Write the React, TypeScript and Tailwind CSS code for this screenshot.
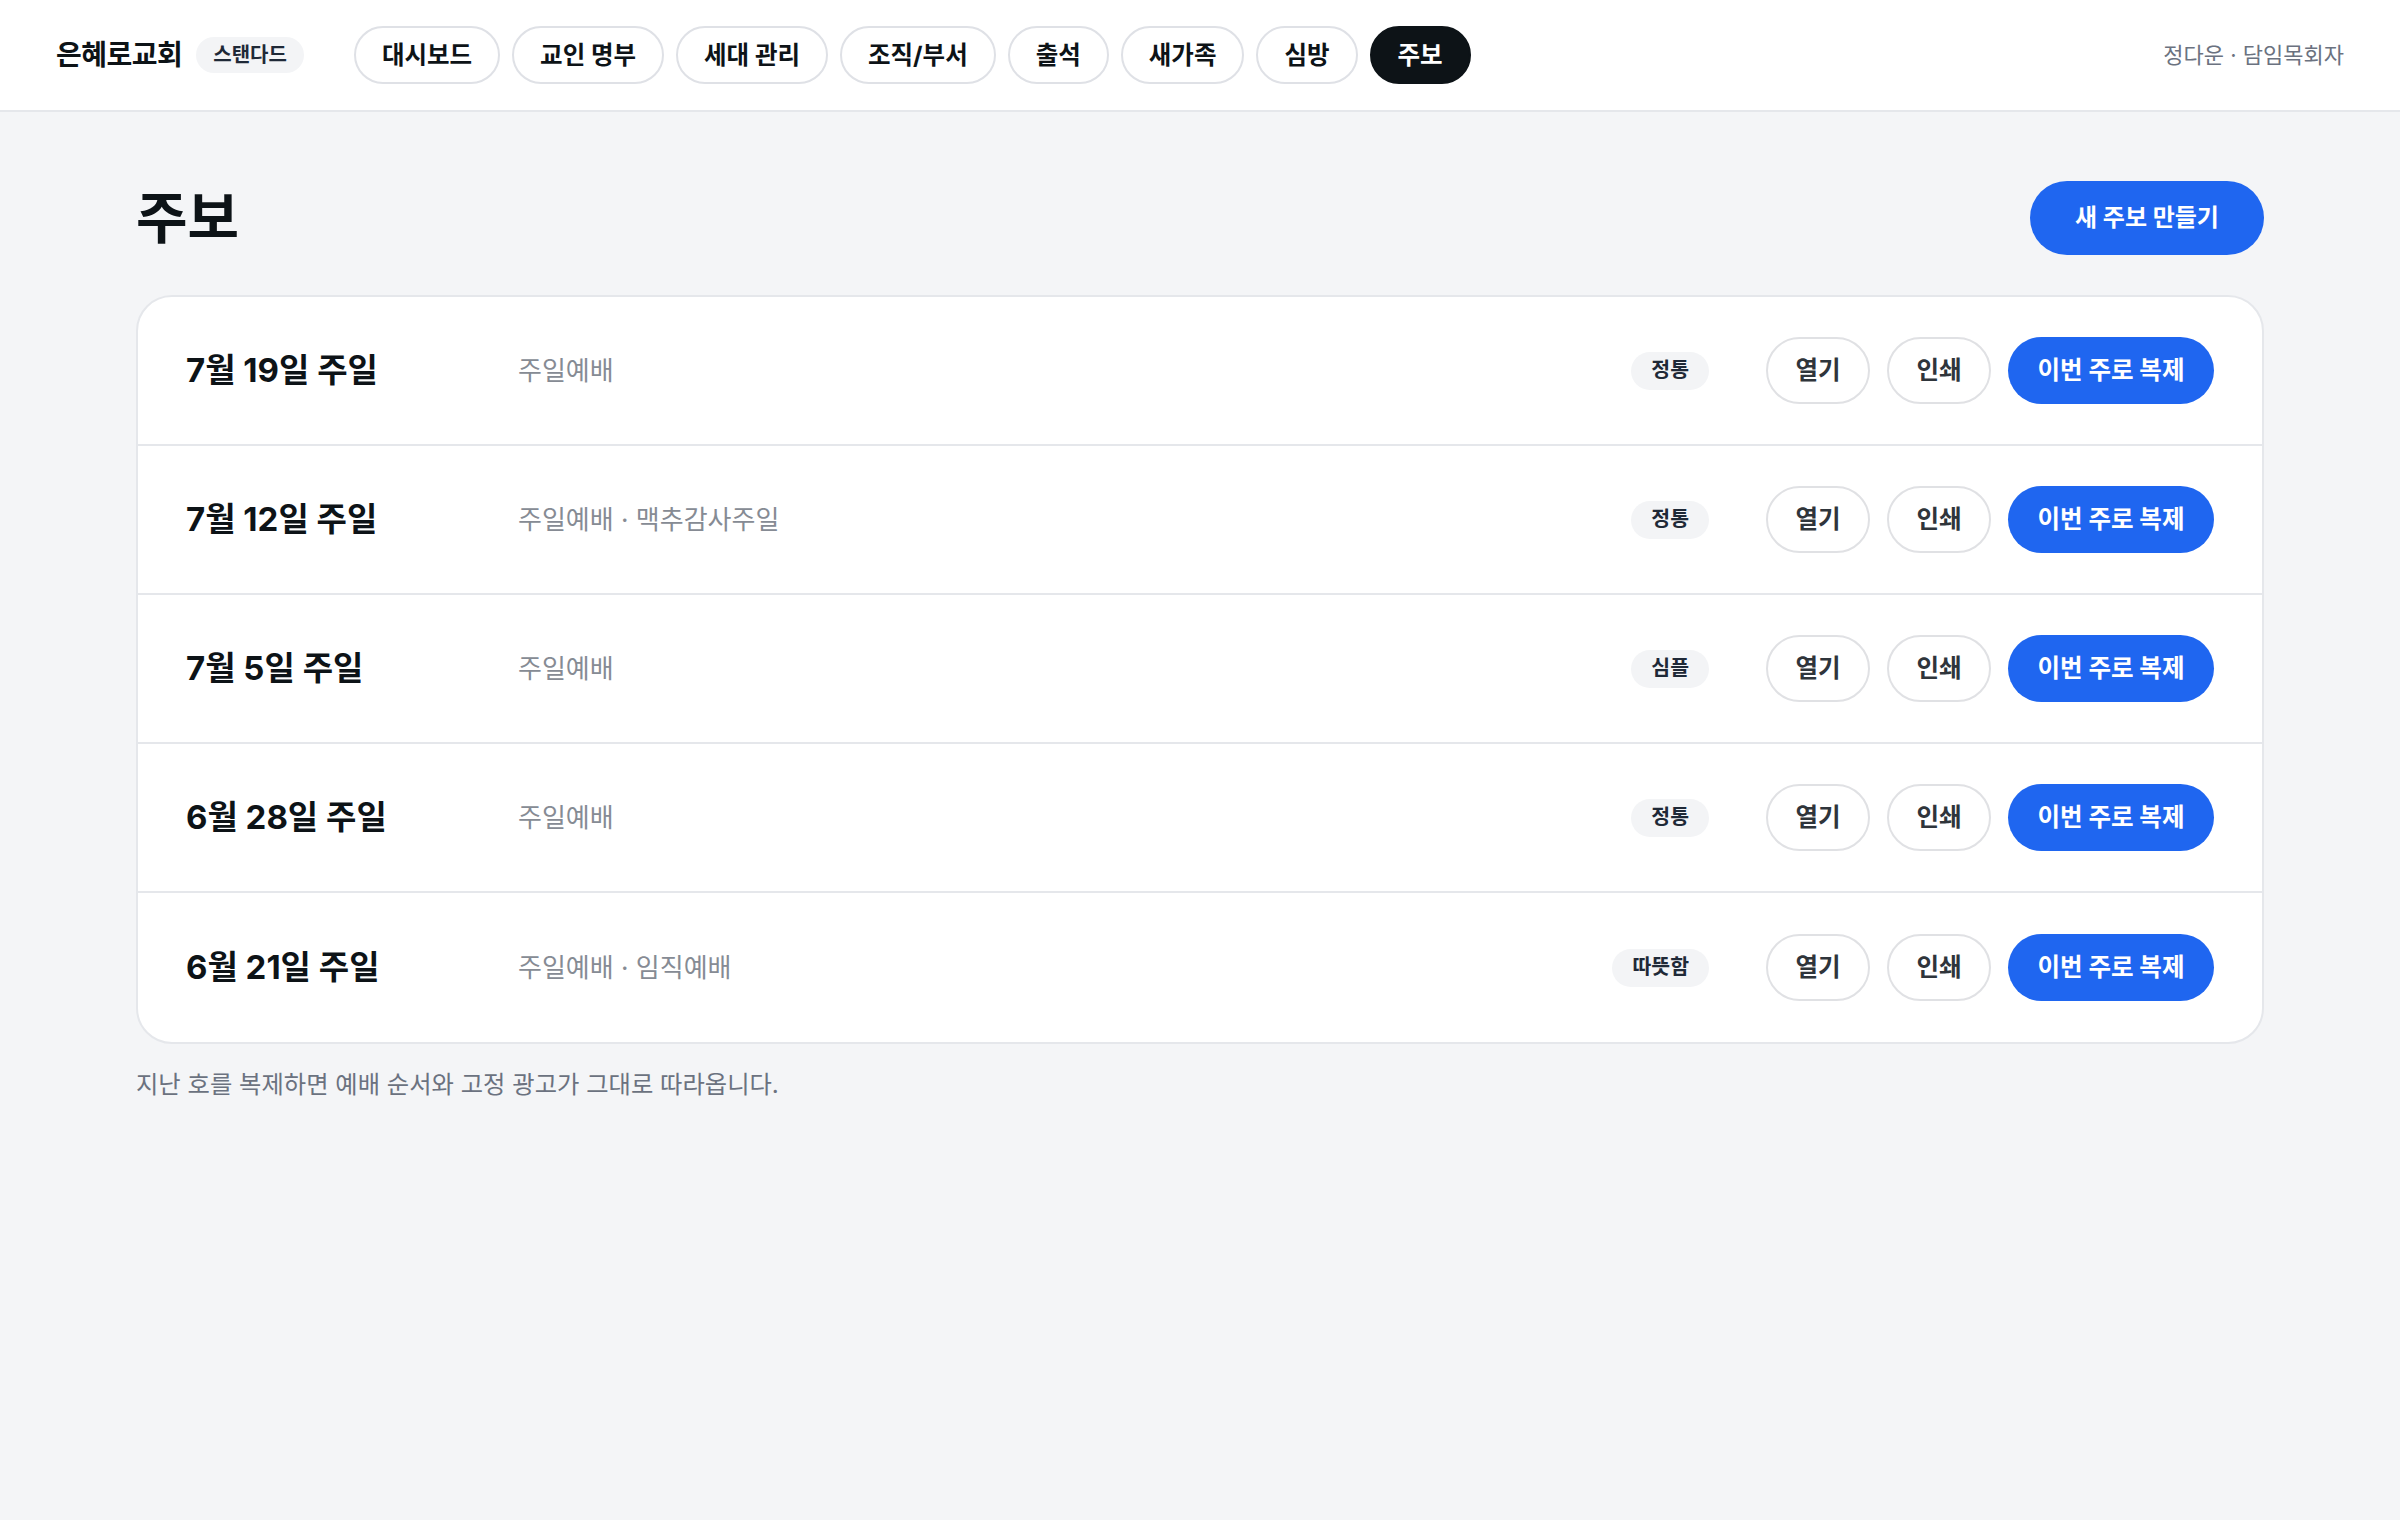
import React from "react";

const navItems = ["대시보드", "교인 명부", "세대 관리", "조직/부서", "출석", "새가족", "심방", "주보"];

const rows = [
  { date: "7월 19일 주일", desc: "주일예배", tag: "정통" },
  { date: "7월 12일 주일", desc: "주일예배 · 맥추감사주일", tag: "정통" },
  { date: "7월 5일 주일", desc: "주일예배", tag: "심플" },
  { date: "6월 28일 주일", desc: "주일예배", tag: "정통" },
  { date: "6월 21일 주일", desc: "주일예배 · 임직예배", tag: "따뜻함" },
];

export default function App() {
  return (
    <div
      className="min-h-[1520px] w-full bg-[#f4f5f7] text-[#0d1317]"
      style={{ fontFamily: 'Inter, "Noto Sans CJK KR", "Noto Sans", sans-serif' }}
    >
      <header className="flex h-[112px] items-center justify-between border-b-2 border-[#e5e7eb] bg-white px-[56px]">
        <div className="flex items-center">
          <div className="text-[28px] font-bold tracking-[-0.5px] text-[#0d1317]">은혜로교회</div>
          <div className="ml-[14px] flex h-[36px] items-center rounded-full bg-[#f3f4f6] px-[17px] text-[20px] font-semibold text-[#1f2937]">
            스탠다드
          </div>
          <nav className="ml-[50px] flex items-center gap-[12px]">
            {navItems.map((n) => {
              const active = n === "주보";
              return (
                <div
                  key={n}
                  className={
                    active
                      ? "flex h-[58px] items-center rounded-full border-2 border-[#0d1317] bg-[#0d1317] px-[26px] text-[24.5px] font-bold text-white"
                      : "flex h-[58px] items-center rounded-full border-2 border-[#dfe1e6] bg-white px-[26px] text-[24.5px] font-bold text-[#0d1317]"
                  }
                >
                  {n}
                </div>
              );
            })}
          </nav>
        </div>
        <div className="text-[22px] text-[#6b7280]">정다운 · 담임목회자</div>
      </header>

      <main className="px-[136px] pt-[69px]">
        <div className="flex items-center justify-between">
          <h1 className="text-[56px] font-bold leading-none text-[#0d1317]">주보</h1>
          <button className="flex h-[74px] w-[234px] items-center justify-center rounded-full bg-[#1f66f0] text-[24px] font-bold text-white">
            새 주보 만들기
          </button>
        </div>

        <div className="mt-[40px] overflow-hidden rounded-[36px] border-2 border-[#e5e7eb] bg-white">
          {rows.map((r, i) => (
            <div
              key={r.date}
              className={
                "flex h-[149px] items-center px-[48px]" +
                (i < rows.length - 1 ? " border-b-2 border-[#e5e7eb]" : "")
              }
            >
              <div className="w-[332px] text-[33px] font-bold text-[#0d1317]">{r.date}</div>
              <div className="flex-1 text-[26px] text-[#868b94]">{r.desc}</div>
              <div className="flex h-[38px] items-center rounded-full bg-[#f3f4f6] px-[20px] text-[20.5px] font-bold text-[#1f2937]">
                {r.tag}
              </div>
              <div className="ml-[57px] flex items-center gap-[17px]">
                <button className="flex h-[67px] w-[104px] items-center justify-center rounded-full border-2 border-[#e0e1e4] bg-white text-[24.5px] font-bold text-[#2f353b]">
                  열기
                </button>
                <button className="flex h-[67px] w-[104px] items-center justify-center rounded-full border-2 border-[#e0e1e4] bg-white text-[24.5px] font-bold text-[#2f353b]">
                  인쇄
                </button>
                <button className="flex h-[67px] w-[206px] items-center justify-center rounded-full bg-[#1f66f0] text-[24.5px] font-bold text-white">
                  이번 주로 복제
                </button>
              </div>
            </div>
          ))}
        </div>

        <p className="mt-[22px] text-[24.3px] text-[#6b7280]">지난 호를 복제하면 예배 순서와 고정 광고가 그대로 따라옵니다.</p>
      </main>
    </div>
  );
}
